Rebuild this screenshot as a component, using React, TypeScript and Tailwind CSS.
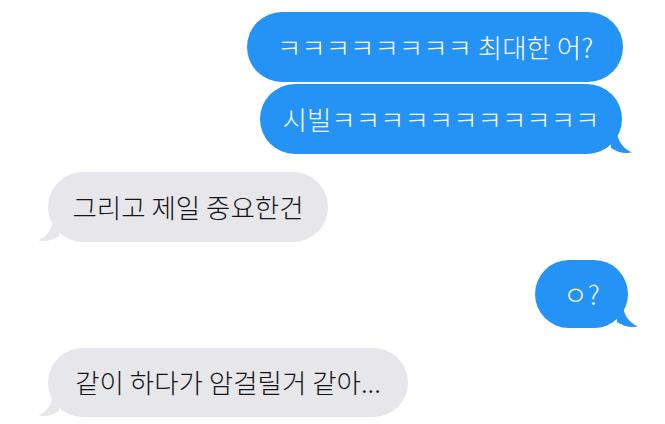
import React from 'react';

const font = { fontFamily: '"Noto Sans CJK KR", "Noto Sans", sans-serif' };

function Tail({ side, color }: { side: 'left' | 'right'; color: string }) {
  // tail drawn for the right side; mirrored for the left
  return (
    <svg
      viewBox="0 0 22 24"
      className={
        side === 'right'
          ? 'absolute bottom-0 right-[-11px] w-[22px] h-[24px]'
          : 'absolute bottom-0 left-[-11px] w-[22px] h-[24px] -scale-x-100'
      }
    >
      <path d="M0 0 H6 C6 10 11 18 21 22.5 C13 24 6 22 0 18 Z" fill={color} />
    </svg>
  );
}

function Sent({ text, tail, className }: { text: string; tail?: boolean; className: string }) {
  return (
    <div className={`relative flex items-center justify-center rounded-full bg-[#2592f6] text-white text-[26.5px] font-light leading-none ${className}`}>
      <span>{text}</span>
      {tail && <Tail side="right" color="#2592f6" />}
    </div>
  );
}

function Received({ text, className }: { text: string; className: string }) {
  return (
    <div className={`relative flex items-center justify-center rounded-full bg-[#e6e6eb] text-[#141414] text-[26.5px] font-light leading-none ${className}`}>
      <span>{text}</span>
      <Tail side="left" color="#e6e6eb" />
    </div>
  );
}

export default function App() {
  return (
    <div className="w-[665px] h-[424px] overflow-hidden bg-white flex flex-col" style={font}>
      <div className="flex justify-end pr-[42px] mt-[12px]">
        <Sent text="ㅋㅋㅋㅋㅋㅋㅋㅋ 최대한 어?" className="w-[376px] h-[70px]" />
      </div>
      <div className="flex justify-end pr-[43px] mt-[2px]">
        <Sent text="시빌ㅋㅋㅋㅋㅋㅋㅋㅋㅋㅋㅋ" tail className="w-[362px] h-[70px]" />
      </div>
      <div className="flex justify-start pl-[48px] mt-[18px]">
        <Received text="그리고 제일 중요한건" className="w-[280px] h-[70px]" />
      </div>
      <div className="flex justify-end pr-[37px] mt-[18px]">
        <Sent text="ㅇ?" tail className="w-[93px] h-[68px]" />
      </div>
      <div className="flex justify-start pl-[48px] mt-[20px]">
        <Received text="같이 하다가 암걸릴거 같아..." className="w-[360px] h-[69px]" />
      </div>
    </div>
  );
}
